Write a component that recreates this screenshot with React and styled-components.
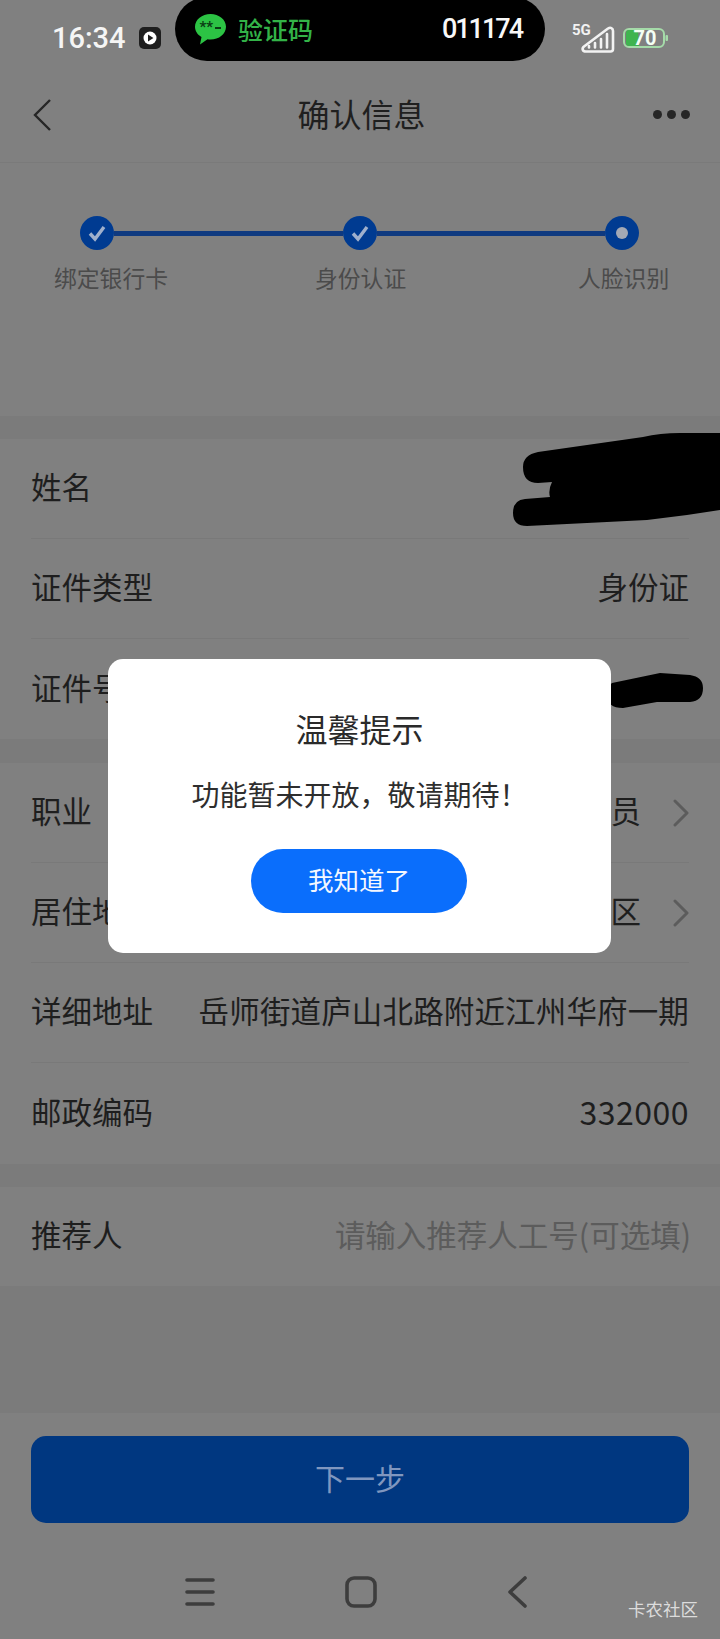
import React from 'react';
import styled, { createGlobalStyle } from 'styled-components';

const GlobalStyle = createGlobalStyle`
  html, body {
    margin: 0;
    padding: 0;
    background: #808080;
    font-family: "Noto Sans CJK SC", "Noto Sans", sans-serif;
  }
  * { box-sizing: border-box; }
`;

const Page = styled.div`
  position: relative;
  width: 720px;
  height: 1639px;
  overflow: hidden;
  background: #808080;
  display: flex;
  flex-direction: column;
`;

const StatusBar = styled.div`
  height: 61px;
  flex: none;
  display: flex;
  align-items: flex-start;
  padding-left: 52px;
`;

const Time = styled.div`
  width: 87px;
  margin-top: 20px;
  font: 500 29px/36px Roboto, sans-serif;
  color: #f5f5f5;
`;

const RecordIcon = styled.svg`
  width: 22px;
  height: 22px;
  margin-top: 27px;
  margin-right: 14px;
  flex: none;
`;

const Pill = styled.div`
  width: 370px;
  height: 64px;
  margin-top: -3px;
  flex: none;
  border-radius: 32px;
  background: #000;
  display: flex;
  align-items: center;
  padding: 0 23px 0 20px;
`;

const PillLabel = styled.span`
  margin-left: 12px;
  font-size: 25px;
  font-weight: 500;
  line-height: 30px;
  color: #33b348;
`;

const PillCode = styled.span`
  margin-left: auto;
  font: 500 27px/30px Roboto, sans-serif;
  letter-spacing: -2px;
  color: #f8f8f8;
`;

const SignalIcon = styled.svg`
  width: 44px;
  height: 36px;
  margin: 18px 7px 0 27px;
  flex: none;
`;

const BatteryIcon = styled.svg`
  width: 46px;
  height: 24px;
  margin-top: 26px;
  flex: none;
`;

const Header = styled.div`
  height: 102px;
  flex: none;
  padding: 6px 30px 0 33px;
  display: grid;
  grid-template-columns: 1fr auto 1fr;
  align-items: center;
  border-bottom: 1px solid #7a7a7a;
`;

const Title = styled.h1`
  margin: -4px 0 0;
  font-size: 32px;
  font-weight: 400;
  line-height: 40px;
  color: #1f1f1f;
`;

const Dots = styled.div`
  justify-self: end;
  display: flex;
  gap: 5px;
  span {
    width: 9px;
    height: 9px;
    border-radius: 50%;
    background: #262626;
  }
`;

const Stepper = styled.div`
  height: 253px;
  flex: none;
  padding-top: 53px;
`;

const Track = styled.div`
  display: flex;
  align-items: center;
  padding: 0 81px 0 80px;
`;

const Dot = styled.div`
  width: 34px;
  height: 34px;
  flex: none;
  border-radius: 50%;
  background: #003b91;
  display: flex;
  align-items: center;
  justify-content: center;
  color: #9fb0cc;
`;

const Inner = styled.div`
  width: 12px;
  height: 12px;
  border-radius: 50%;
  background: #a3a9b5;
`;

const Connector = styled.div`
  flex: 1;
  height: 5px;
  background: #0f3a80;
`;

const StepLabels = styled.div`
  display: grid;
  grid-template-columns: 261px 263px auto;
  padding-left: 54px;
  margin-top: 12px;
`;

const StepLabel = styled.div`
  font-size: 22.8px;
  line-height: 32px;
  color: #4b4b4b;
`;

const Band = styled.div`
  height: ${props => props.$h}px;
  flex: ${props => (props.$h ? 'none' : '1')};
  background: #7b7b7b;
`;

const Row = styled.div`
  height: ${props => props.$h || 100}px;
  flex: none;
  margin: 0 31px;
  padding-bottom: 5px;
  display: flex;
  align-items: center;
  justify-content: space-between;
  font-size: 30.5px;
  color: #1e1e1e;
  border-bottom: ${props => (props.$last ? 'none' : '1px solid #797979')};
`;

const Value = styled.div`
  display: flex;
  align-items: center;
  letter-spacing: ${props => props.$spread || 0}px;
`;

const Digits = styled.span`
  font-size: 32px;
  letter-spacing: 0.5px;
`;

const Placeholder = styled.div`
  margin-right: -2px;
  color: #5c5c5c;
`;

const Chevron = styled.svg`
  width: 16px;
  height: 28px;
  margin-left: 32px;
  margin-top: 5px;
  flex: none;
`;

const Footer = styled.div`
  height: 226px;
  flex: none;
  padding: 23px 31px 0;
`;

const NextButton = styled.button`
  display: block;
  width: 100%;
  height: 87px;
  border: 0;
  padding: 0 0 6px;
  border-radius: 15px;
  background: #003780;
  font-family: inherit;
  font-size: 30px;
  color: #8097bf;
`;

const NavBar = styled.div`
  display: flex;
  align-items: center;
  gap: 130px;
  margin-top: 53px;
  padding-left: 154px;
  color: #3d3d3d;
`;

const Watermark = styled.div`
  position: absolute;
  right: 22px;
  bottom: 18px;
  font-size: 17.5px;
  line-height: 24px;
  color: #dcdcdc;
`;

const Scribble = styled.svg`
  position: absolute;
  left: 0;
  top: 0;
  width: 720px;
  height: 1639px;
  pointer-events: none;
`;

const Modal = styled.div`
  position: absolute;
  left: 108px;
  top: 659px;
  width: 503px;
  height: 294px;
  border-radius: 15px;
  background: #fff;
  display: flex;
  flex-direction: column;
  align-items: center;
  padding-top: 47px;
`;

const ModalTitle = styled.div`
  font-size: 32px;
  line-height: 44px;
  color: #2a2a2a;
`;

const ModalText = styled.div`
  margin-top: 24px;
  font-size: 28px;
  line-height: 40px;
  color: #2e2e2e;
`;

const ModalButton = styled.button`
  width: 216px;
  height: 64px;
  margin-top: 35px;
  margin-left: -1px;
  border: 0;
  padding: 0 0 5px;
  border-radius: 32px;
  background: #0a6efc;
  font-family: inherit;
  font-size: 25.5px;
  color: #f4f7ff;
`;

const Arrow = () => (
  <Chevron viewBox="0 0 16 28">
    <path d="M2 2l12 12L2 26" fill="none" stroke="#5c5c5c" strokeWidth="3" strokeLinecap="round" strokeLinejoin="round" />
  </Chevron>
);

const Check = () => (
  <svg width="20" height="18" viewBox="0 0 20 18">
    <path d="M3 9.500l5 5.500L17 3" fill="none" stroke="currentColor" strokeWidth="3.400" />
  </svg>
);

export default function App() {
  return (
    <Page>
      <GlobalStyle />
      <StatusBar>
        <Time>16:34</Time>
        <RecordIcon viewBox="0 0 22 22">
          <rect width="22" height="22" rx="5" fill="#1e1e1e" />
          <circle cx="11" cy="11" r="6.500" fill="#fff" />
          <path d="M9 7.600l5.400 3.400L9 14.400z" fill="#1e1e1e" />
        </RecordIcon>
        <Pill>
          <svg width="31" height="31" viewBox="0 0 31 31">
            <path d="M15.500 0C24 0 31 5.600 31 12.800S24 25.600 15.500 25.600c-1 0-2 0-3-.3L5 30.500l1.500-7.400C2.500 20.800 0 17 0 12.800 0 5.600 7 0 15.500 0z" fill="#2cc344" />
            <text x="4.500" y="18" fontSize="15" fontWeight="700" fontFamily="Roboto, sans-serif" fill="#0a3d14">**</text>
            <rect x="20" y="13" width="6" height="2" fill="#0a3d14" />
          </svg>
          <PillLabel>验证码</PillLabel>
          <PillCode>011174</PillCode>
        </Pill>
        <SignalIcon viewBox="0 -6 44 36">
          <text x="0" y="11" fontSize="15" fontWeight="700" fontFamily="Roboto, sans-serif" fill="#f2f2f2">5G</text>
          <path d="M12 22.500L36 4.500c2.500-1.500 5-.5 5 2.500v18c0 1.500-1 2.500-2.500 2.500H14c-3.500 0-4.500-3-2-5z" fill="none" stroke="#f2f2f2" strokeWidth="2.600" strokeLinejoin="round" />
          <path d="M17 22v1.500M23 19v4.500M29 15v8.500M35 10v13.500" fill="none" stroke="#f2f2f2" strokeWidth="2.600" strokeLinecap="round" />
        </SignalIcon>
        <BatteryIcon viewBox="0 0 46 24">
          <rect x="1" y="3" width="40" height="18" rx="5" fill="none" stroke="#a5dba9" strokeWidth="2" />
          <path d="M3 7c0-2 1-3 3-3h9l1 16H6c-2 0-3-1-3-3z" fill="#3fb44f" />
          <rect x="42.500" y="9" width="2.500" height="6" rx="1" fill="#a5dba9" />
          <text x="10.500" y="19" fontSize="20" fontWeight="700" fontFamily="Roboto, sans-serif" fill="#f4fff4">70</text>
        </BatteryIcon>
      </StatusBar>

      <Header>
        <svg width="18" height="32" viewBox="0 0 18 32">
          <path d="M17 1L2 16l15 15" fill="none" stroke="#262626" strokeWidth="2.400" />
        </svg>
        <Title>确认信息</Title>
        <Dots><span /><span /><span /></Dots>
      </Header>

      <Stepper>
        <Track>
          <Dot><Check /></Dot>
          <Connector />
          <Dot><Check /></Dot>
          <Connector />
          <Dot><Inner /></Dot>
        </Track>
        <StepLabels>
          <StepLabel>绑定银行卡</StepLabel>
          <StepLabel>身份认证</StepLabel>
          <StepLabel>人脸识别</StepLabel>
        </StepLabels>
      </Stepper>

      <Band $h={23} />
      <Row>姓名</Row>
      <Row>证件类型<Value>身份证</Value></Row>
      <Row $last>证件号码</Row>
      <Band $h={24} />
      <Row>职业<Value>公司职员<Arrow /></Value></Row>
      <Row>居住地区<Value>浔阳区<Arrow /></Value></Row>
      <Row>详细地址<Value $spread={0.15}>岳师街道庐山北路附近江州华府一期</Value></Row>
      <Row $h={101} $last>邮政编码<Value><Digits>332000</Digits></Value></Row>
      <Band $h={23} />
      <Row $h={99} $last>推荐人<Placeholder>请输入推荐人工号(可选填)</Placeholder></Row>
      <Band />

      <Footer>
        <NextButton>下一步</NextButton>
        <NavBar>
          <svg width="30" height="30" viewBox="0 0 30 30">
            <path d="M2 3h26M2 15h26M2 27h26" fill="none" stroke="currentColor" strokeWidth="3.600" strokeLinecap="round" />
          </svg>
          <svg width="32" height="32" viewBox="0 0 32 32">
            <rect x="2" y="2" width="28" height="28" rx="7" fill="none" stroke="currentColor" strokeWidth="3.600" />
          </svg>
          <svg width="20" height="32" viewBox="0 0 20 32">
            <path d="M18 2L3 16l15 14" fill="none" stroke="currentColor" strokeWidth="3.600" strokeLinecap="round" strokeLinejoin="round" />
          </svg>
        </NavBar>
      </Footer>

      <Scribble viewBox="0 0 720 1639">
        <path d="M538 452L643 437Q660 433 680 433H720V510L687 515L647 520L527 526Q513 526 513 513Q513 500 525 499L550 497Q548 490 552 482L538 483Q523 483 523 467Q523 455 538 452Z" fill="#000" />
        <path d="M612 683L660 673L690 675Q703 677 703 688Q703 701 690 702H657L623 708Q607 708 607 695Q607 686 612 683Z" fill="#000" />
      </Scribble>

      <Modal>
        <ModalTitle>温馨提示</ModalTitle>
        <ModalText>功能暂未开放，敬请期待！</ModalText>
        <ModalButton>我知道了</ModalButton>
      </Modal>

      <Watermark>卡农社区</Watermark>
    </Page>
  );
}
